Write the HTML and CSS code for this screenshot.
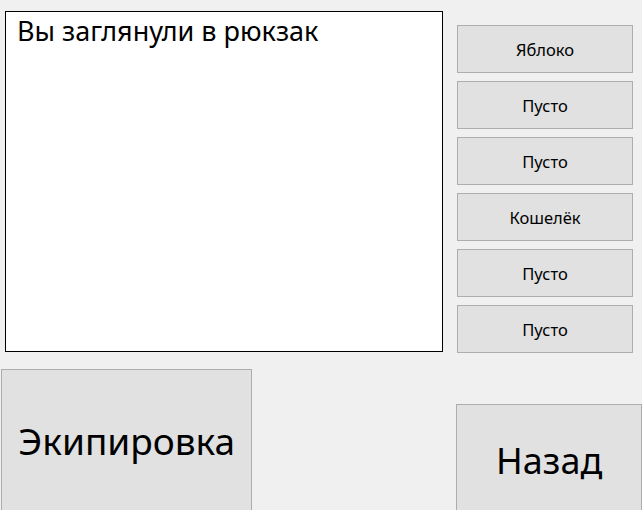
FILE: index.html
```html
<!DOCTYPE html>
<html lang="ru">
<head>
<meta charset="utf-8">
<link rel="stylesheet" href="styles.css">
</head>
<body>
<div class="window">
  <div class="top-row">
    <div class="log">Вы заглянули в рюкзак</div>
    <div class="slots">
      <button class="btn slot">Яблоко</button>
      <button class="btn slot">Пусто</button>
      <button class="btn slot">Пусто</button>
      <button class="btn slot">Кошелёк</button>
      <button class="btn slot">Пусто</button>
      <button class="btn slot">Пусто</button>
    </div>
  </div>
  <div class="bottom-row">
    <button class="btn big equip">Экипировка</button>
    <button class="btn big back">Назад</button>
  </div>
</div>
</body>
</html>
```
FILE: styles.css
```css
html, body {
  margin: 0;
  padding: 0;
  background: #f0f0f0;
  width: 642px;
  height: 510px;
  overflow: hidden;
}
.window {
  font-family: "Comic Sans MS", "Noto Sans", sans-serif;
  color: #000;
}
.top-row {
  display: flex;
  align-items: flex-start;
  padding: 11px 0 0 5px;
}
.log {
  box-sizing: border-box;
  width: 438px;
  height: 341px;
  background: #fff;
  border: 1px solid #000;
  padding: 2px 0 0 11px;
  font-size: 27px;
  line-height: 34px;
}
.slots {
  display: flex;
  flex-direction: column;
  gap: 8px;
  margin: 14px 0 0 14px;
}
.btn {
  box-sizing: border-box;
  background: #e1e1e1;
  border: 1px solid #adadad;
  font-family: inherit;
  color: #000;
  padding: 0;
  margin: 0;
  display: flex;
  align-items: center;
  justify-content: center;
}
.slot {
  width: 176px;
  height: 48px;
  font-size: 16.5px;
}
.bottom-row {
  display: flex;
  align-items: flex-start;
  margin-top: 16px;
  padding-left: 1px;
}
.big {
  font-size: 37px;
}
.equip {
  width: 252px;
  height: 150px;
  padding-bottom: 8px;
}
.back {
  width: 186px;
  height: 120px;
  margin: 35px 0 0 204px;
  padding-bottom: 8px;
  font-size: 36px;
}
```
